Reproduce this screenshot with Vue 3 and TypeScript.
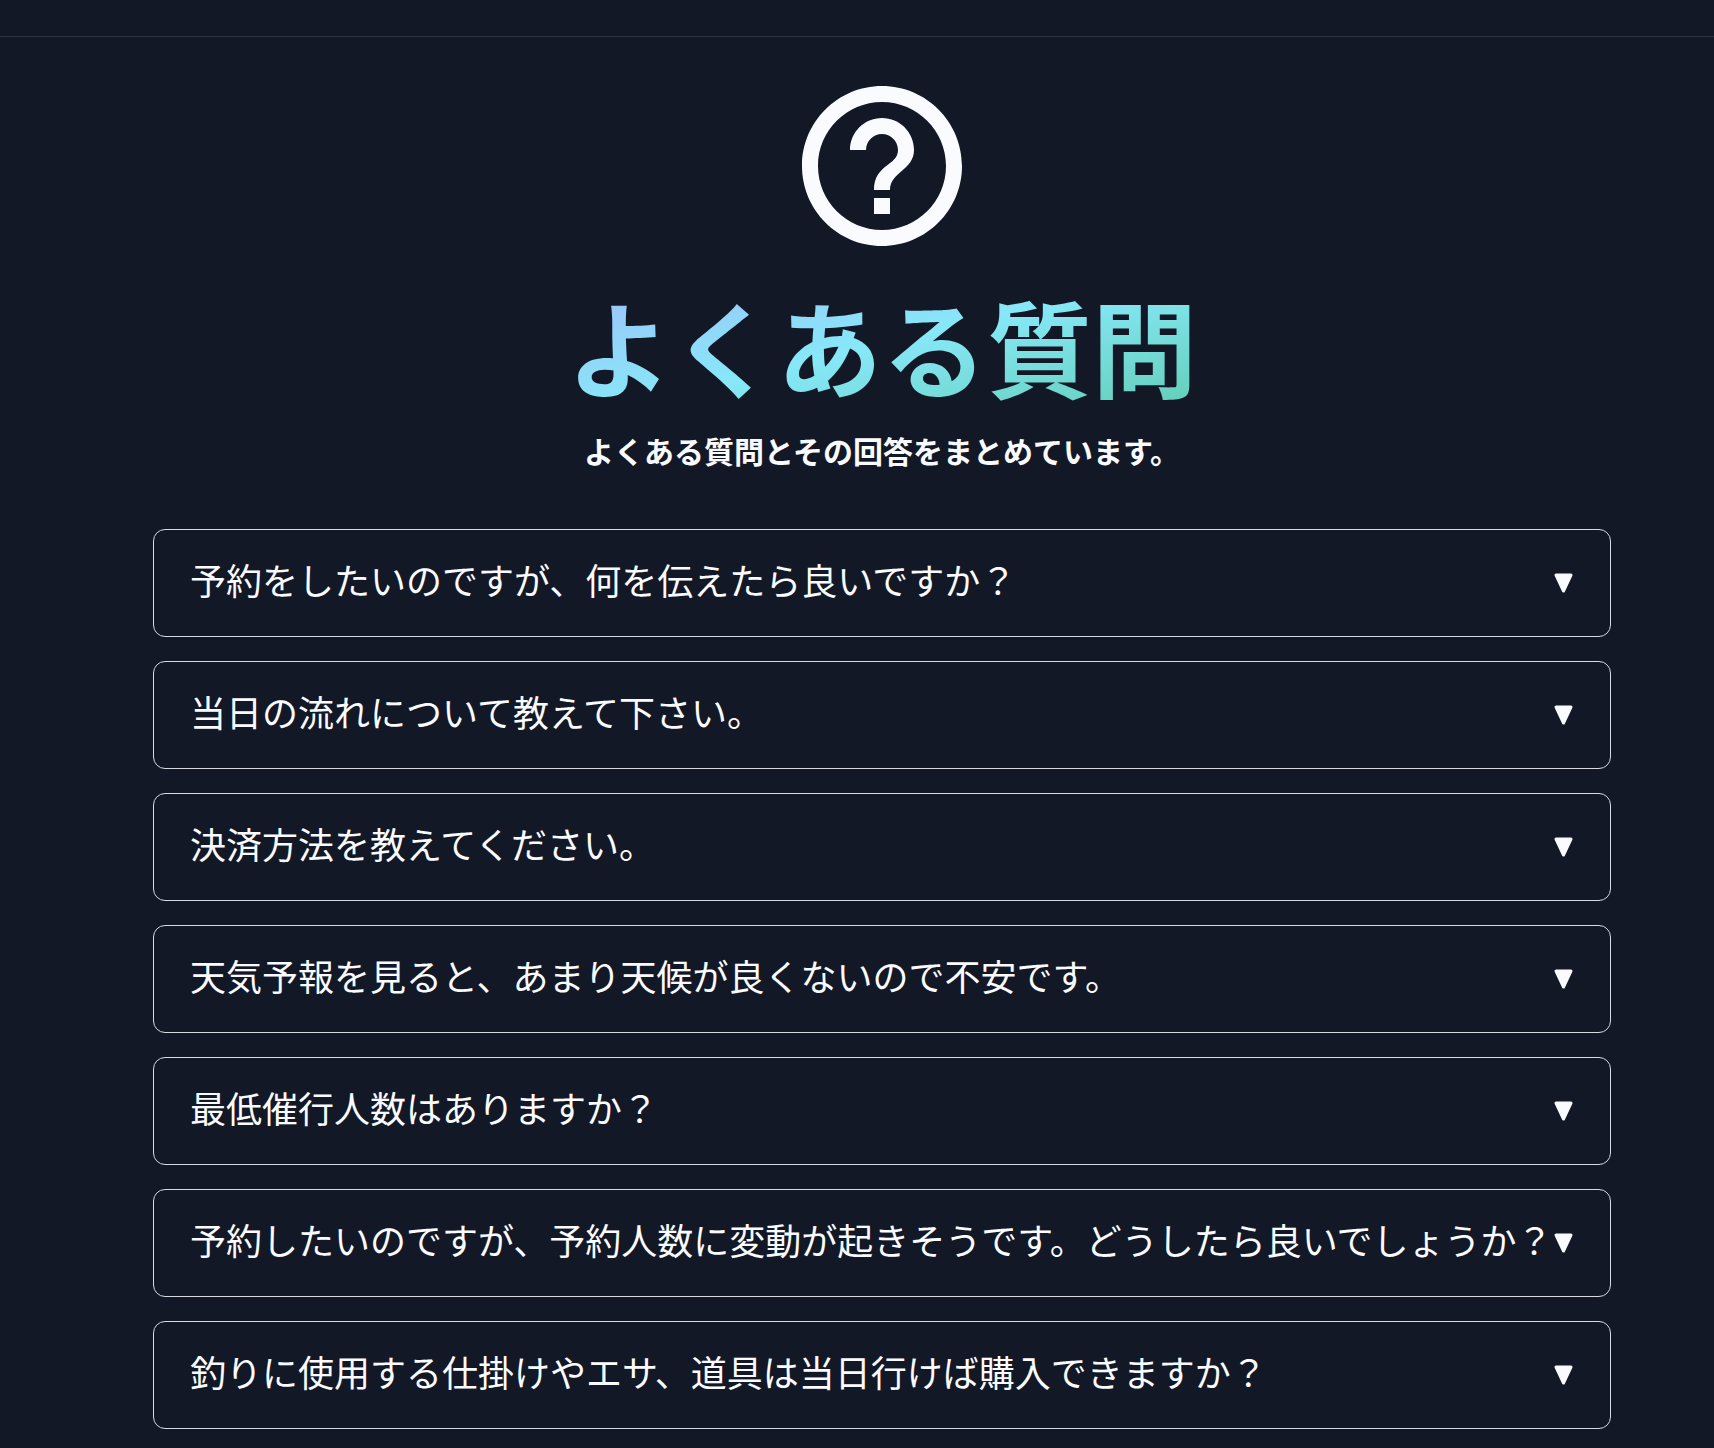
<script setup lang="ts">
interface Faq {
  id: number
  question: string
}

const faqs: Faq[] = [
  '予約をしたいのですが、何を伝えたら良いですか？',
  '当日の流れについて教えて下さい。',
  '決済方法を教えてください。',
  '天気予報を見ると、あまり天候が良くないので不安です。',
  '最低催行人数はありますか？',
  '予約したいのですが、予約人数に変動が起きそうです。どうしたら良いでしょうか？',
  '釣りに使用する仕掛けやエサ、道具は当日行けば購入できますか？',
].map((question, id) => ({ id, question }))
</script>

<template>
  <div class="page">
    <header class="topbar"></header>
    <main class="content">
      <section class="hero">
        <svg class="hero-icon" viewBox="0 0 24 24" aria-hidden="true">
          <path
            d="M11 18h2v-2h-2v2zm1-16C6.48 2 2 6.48 2 12s4.48 10 10 10 10-4.48 10-10S17.52 2 12 2zm0 18c-4.41 0-8-3.59-8-8s3.59-8 8-8 8 3.59 8 8-3.59 8-8 8zm0-14c-2.21 0-4 1.79-4 4h2c0-1.1.9-2 2-2s2 .9 2 2c0 2-3 1.75-3 5h2c0-2.25 3-2.5 3-5 0-2.21-1.79-4-4-4z"
          />
        </svg>
        <h1 class="title">よくある質問</h1>
        <p class="subtitle">よくある質問とその回答をまとめています。</p>
      </section>
      <section class="faq-list">
        <button v-for="faq in faqs" :key="faq.id" type="button" class="faq">
          <span class="question">{{ faq.question }}</span>
          <svg class="arrow" viewBox="0 0 20 20" aria-hidden="true">
            <path d="M2 2H17L9.5 18Z" />
          </svg>
        </button>
      </section>
    </main>
  </div>
</template>

<style>
body {
  margin: 0;
  background: #121826;
}
</style>

<style scoped>
.page {
  min-height: 100vh;
  overflow: hidden;
  background: #121826;
  color: #fafbfe;
  font-family: "Noto Sans CJK JP", sans-serif;
}

.topbar {
  height: 36px;
  border-bottom: 1px solid #2c3240;
}

.content {
  padding: 33px 103px 20px 153px;
}

.hero {
  display: flex;
  flex-direction: column;
  align-items: center;
}

.hero-icon {
  width: 192px;
  height: 192px;
  fill: currentColor;
}

.title {
  margin: 4px 0 0;
  font-size: 105px;
  font-weight: 700;
  line-height: 156px;
  white-space: nowrap;
  color: transparent;
  background: linear-gradient(to bottom right, #a2bbfb, #87e8f8, #5fcbb0);
  background-clip: text;
  -webkit-background-clip: text;
}

.subtitle {
  margin: 4px 0 0;
  font-size: 30px;
  font-weight: 700;
  line-height: 48px;
}

.faq-list {
  display: flex;
  flex-direction: column;
  gap: 24px;
  margin-top: 55px;
}

.faq {
  display: flex;
  align-items: center;
  justify-content: space-between;
  padding: 26px 36px;
  border: 1px solid #d7dae0;
  border-radius: 12px;
  background: transparent;
  color: inherit;
  font-family: inherit;
  font-size: 36px;
  font-weight: 400;
  line-height: 46px;
  text-align: left;
  cursor: pointer;
}

.question {
  flex: 1;
  min-width: 0;
  padding-bottom: 8px;
  white-space: nowrap;
}

.arrow {
  flex: none;
  width: 20px;
  height: 20px;
  fill: currentColor;
  stroke: currentColor;
  stroke-width: 3;
  stroke-linejoin: round;
}
</style>
